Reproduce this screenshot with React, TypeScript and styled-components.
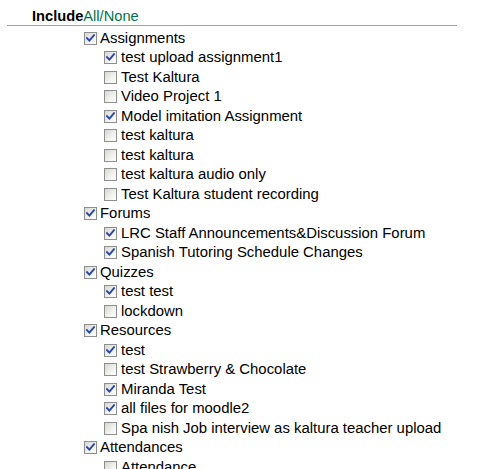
import styled, { createGlobalStyle } from "styled-components";

const GlobalStyle = createGlobalStyle`
  body {
    margin: 0;
    background: #ffffff;
    font-family: "Liberation Sans", Arial, sans-serif;
    font-size: 14.67px;
    color: #000000;
  }
`;

type Item = { label: string; checked: boolean };
type Group = { label: string; checked: boolean; items: Item[] };

const groups: Group[] = [
  {
    label: "Assignments",
    checked: true,
    items: [
      { label: "test upload assignment1", checked: true },
      { label: "Test Kaltura", checked: false },
      { label: "Video Project 1", checked: false },
      { label: "Model imitation Assignment", checked: true },
      { label: "test kaltura", checked: false },
      { label: "test kaltura", checked: false },
      { label: "test kaltura audio only", checked: false },
      { label: "Test Kaltura student recording", checked: false },
    ],
  },
  {
    label: "Forums",
    checked: true,
    items: [
      { label: "LRC Staff Announcements&Discussion Forum", checked: true },
      { label: "Spanish Tutoring Schedule Changes", checked: true },
    ],
  },
  {
    label: "Quizzes",
    checked: true,
    items: [
      { label: "test test", checked: true },
      { label: "lockdown", checked: false },
    ],
  },
  {
    label: "Resources",
    checked: true,
    items: [
      { label: "test", checked: true },
      { label: "test Strawberry & Chocolate", checked: false },
      { label: "Miranda Test", checked: true },
      { label: "all files for moodle2", checked: true },
      { label: "Spa nish Job interview as kaltura teacher upload", checked: false },
    ],
  },
  {
    label: "Attendances",
    checked: true,
    items: [{ label: "Attendance", checked: false }],
  },
];

const Wrapper = styled.div`
  margin-left: 7px;
  width: 450px;
`;

const Header = styled.div`
  display: flex;
  padding-top: 8px;
  padding-left: 25px;
  line-height: 17px;
  border-bottom: 1px solid #a0a0a0;
`;

const HeaderTitle = styled.span`
  font-weight: bold;
`;

const HeaderLink = styled.a`
  color: #00734a;
  text-decoration: none;
  cursor: pointer;
`;

const List = styled.div`
  padding-top: 2.5px;
`;

const Row = styled.div<{ $level: number }>`
  display: flex;
  align-items: center;
  height: 19.5px;
  padding-left: ${(p) => (p.$level === 1 ? 77 : 97)}px;
  white-space: nowrap;
`;

const Box = styled.span`
  display: flex;
  align-items: center;
  justify-content: center;
  box-sizing: border-box;
  width: 13px;
  height: 13px;
  margin-right: 3px;
  border: 1px solid #8d8e8e;
  background: linear-gradient(135deg, #d6d6d2 0%, #f2f2ef 60%, #ffffff 100%);
  flex-shrink: 0;
`;

const Label = styled.span<{ $level: number }>`
  margin-left: ${(p) => (p.$level === 1 ? 0 : 1)}px;
  font-size: 14.9px;
  line-height: 17px;
`;

const Check = () => (
  <svg width="9" height="9" viewBox="0 0 9 9">
    <path
      d="M1 4.2 L3.4 6.6 L8 1.2"
      fill="none"
      stroke="#2a47a8"
      strokeWidth="1.9"
      strokeLinecap="square"
    />
  </svg>
);

const Option = ({ label, checked, level }: Item & { level: number }) => (
  <Row $level={level}>
    <Box>{checked && <Check />}</Box>
    <Label $level={level}>{label}</Label>
  </Row>
);

const App = () => (
  <>
    <GlobalStyle />
    <Wrapper>
      <Header>
        <HeaderTitle>Include</HeaderTitle>
        <HeaderLink>All</HeaderLink>
        <HeaderLink>/</HeaderLink>
        <HeaderLink>None</HeaderLink>
      </Header>
      <List>
        {groups.map((g, gi) => (
          <div key={gi}>
            <Option label={g.label} checked={g.checked} level={1} />
            {g.items.map((it, ii) => (
              <Option key={ii} label={it.label} checked={it.checked} level={2} />
            ))}
          </div>
        ))}
      </List>
    </Wrapper>
  </>
);

export default App;
